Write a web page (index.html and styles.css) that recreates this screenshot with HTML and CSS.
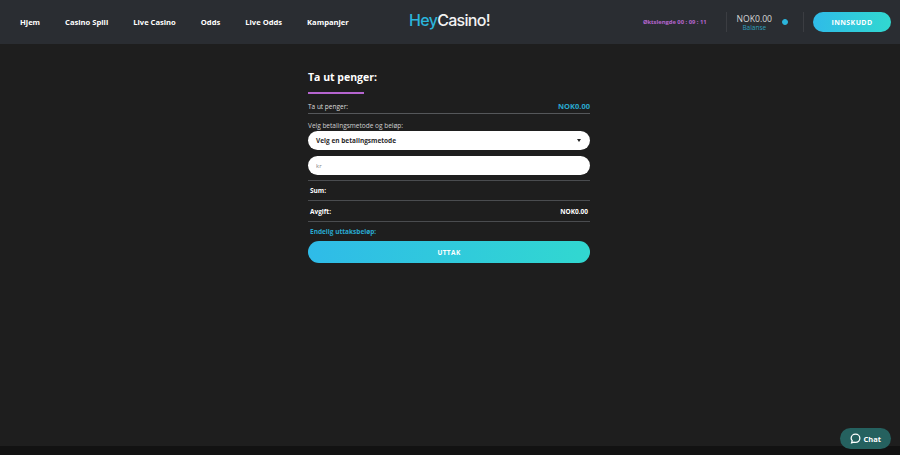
FILE: index.html
```html
<!DOCTYPE html>
<html lang="no">
<head>
  <meta charset="UTF-8" />
  <title>HeyCasino</title>
  <link rel="stylesheet" href="styles.css">
</head>
<body>
  <header class="topbar">
    <nav class="nav">
      <a>Hjem</a>
      <a>Casino Spill</a>
      <a>Live Casino</a>
      <a>Odds</a>
      <a>Live Odds</a>
      <a>Kampanjer</a>
    </nav>
    <div class="logo"><span class="logo-hey">Hey</span>Casino!</div>
    <div class="account">
      <span class="session">Øktslengde 00 : 09 : 11</span>
      <span class="divider"></span>
      <div class="balance">
        <span class="balance-amount">NOK0.00</span>
        <span class="balance-label">Balanse</span>
      </div>
      <span class="balance-dot"></span>
      <span class="divider divider-last"></span>
      <button class="deposit-btn">INNSKUDD</button>
    </div>
  </header>

  <main class="content">
    <section class="withdraw">
      <h1>Ta ut penger:</h1>
      <div class="title-line"></div>
      <div class="amount-row">
        <span>Ta ut penger:</span>
        <span class="amount">NOK0.00</span>
      </div>
      <label class="method-label">Velg betalingsmetode og beløp:</label>
      <div class="select-box">
        <span>Velg en betalingsmetode</span>
        <span class="caret"></span>
      </div>
      <input class="amount-input" type="text" placeholder="kr">
      <div class="sum-row"><span>Sum:</span></div>
      <div class="sum-row"><span>Avgift:</span><span>NOK0.00</span></div>
      <div class="final-row">Endelig uttaksbeløp:</div>
      <button class="withdraw-btn">UTTAK</button>
    </section>
  </main>

  <footer class="bottom-strip"></footer>

  <div class="chat-btn">
    <svg width="11" height="11" viewBox="0 0 24 24" fill="none" stroke="#fff" stroke-width="2.8">
      <path d="M12 2.500c5.500 0 9.500 4 9.500 9s-4 9-9.500 9c-1.200 0-2.400-.2-3.500-.6L3.500 21.500l1.300-4.800C3.400 15.100 2.500 13.400 2.500 11.500c0-5 4-9 9.500-9z"/>
    </svg>
    <span>Chat</span>
  </div>
</body>
</html>
```

FILE: styles.css
```css
html, body {
  margin: 0;
  padding: 0;
  height: 100%;
  overflow: hidden;
}
body {
  display: flex;
  flex-direction: column;
  background: #1e1e1e;
  color: #fff;
  font-family: 'Open Sans', sans-serif;
}
.topbar {
  flex: none;
  height: 44px;
  display: grid;
  grid-template-columns: 1fr auto 1fr;
  align-items: center;
  background: #2a2d32;
  padding: 0 9px 0 20px;
}
.nav {
  display: flex;
  gap: 25px;
  font-size: 7.600px;
  font-weight: 700;
  margin-top: -1px;
}
.logo {
  font-family: 'Inter', sans-serif;
  font-size: 16px;
  font-weight: 500;
  letter-spacing: -0.7px;
  color: #f2f2f2;
  margin-top: -5px;
  padding-right: 12px;
}
.logo-hey {
  color: #2bb5dc;
}
.account {
  display: flex;
  align-items: center;
  justify-content: flex-end;
}
.session {
  font-size: 5.800px;
  font-weight: 700;
  color: #b565cf;
  white-space: nowrap;
}
.divider {
  width: 1px;
  height: 20px;
  background: #3b3d42;
  margin: 0 10px 0 19px;
}
.divider-last {
  margin: 0 9px 0 15px;
}
.balance {
  display: flex;
  flex-direction: column;
  align-items: center;
  margin-top: 1px;
}
.balance-amount {
  font-size: 8.600px;
  line-height: 9px;
  color: #d8d8d8;
}
.balance-label {
  font-size: 6.500px;
  line-height: 7px;
  color: #2f9fbe;
}
.balance-dot {
  width: 4px;
  height: 4px;
  margin-left: 10px;
  border: 1px solid #2bb5dc;
  border-radius: 50%;
  background: #2bb5dc;
}
.deposit-btn, .withdraw-btn {
  border: none;
  color: #fff;
  font-family: inherit;
  font-weight: 700;
  letter-spacing: 0.4px;
  background: linear-gradient(90deg, #2fbbe8, #31d8d0);
}
.deposit-btn {
  width: 78px;
  height: 20px;
  padding: 0;
  border-radius: 10px;
  font-size: 7px;
}
.content {
  flex: 1;
  display: flex;
  justify-content: center;
}
.withdraw {
  width: 282px;
  margin-right: 2px;
  padding-top: 25px;
  font-size: 6.500px;
}
.withdraw h1 {
  margin: 0;
  font-size: 10.500px;
  line-height: 16px;
  font-weight: 700;
}
.title-line {
  width: 56px;
  height: 2px;
  margin-top: 7px;
  background: #b565cf;
}
.amount-row {
  display: flex;
  justify-content: space-between;
  align-items: flex-end;
  box-sizing: border-box;
  height: 20px;
  padding-bottom: 2px;
  border-bottom: 1px solid #55575a;
  color: #dcdcdc;
}
.amount {
  font-size: 7.500px;
  font-weight: 700;
  color: #29a9d0;
}
.method-label {
  display: block;
  margin-top: 7px;
  line-height: 10px;
  color: #d0d0d0;
}
.select-box, .amount-input {
  box-sizing: border-box;
  width: 100%;
  height: 19px;
  border-radius: 10px;
  background: #fff;
}
.select-box {
  display: flex;
  justify-content: space-between;
  align-items: center;
  padding: 0 9px 0 8px;
  color: #2a2a2a;
  font-weight: 700;
}
.caret {
  border-left: 2.500px solid transparent;
  border-right: 2.500px solid transparent;
  border-top: 3px solid #222;
}
.amount-input {
  display: block;
  margin: 6px 0 5px;
  padding: 0 8px;
  border: none;
  outline: none;
  font-family: inherit;
  font-size: 6px;
}
.amount-input::placeholder {
  color: #888;
}
.sum-row {
  display: flex;
  justify-content: space-between;
  align-items: center;
  box-sizing: border-box;
  height: 20px;
  padding: 0 2px;
  border-top: 1px solid #4a4c4f;
  font-weight: 700;
}
.sum-row + .sum-row {
  height: 21px;
}
.final-row {
  box-sizing: border-box;
  height: 20px;
  padding: 0 2px;
  line-height: 19px;
  border-top: 1px solid #4a4c4f;
  color: #29a9d0;
  font-weight: 700;
}
.withdraw-btn {
  display: block;
  width: 100%;
  height: 22px;
  padding: 0;
  border-radius: 11px;
  font-size: 6.500px;
}
.bottom-strip {
  flex: none;
  height: 9px;
  background: #121212;
}
.chat-btn {
  position: absolute;
  right: 9px;
  bottom: 6px;
  display: flex;
  align-items: center;
  gap: 3px;
  height: 21px;
  padding: 0 10px 0 10px;
  border-radius: 11px;
  background: #25615f;
  font-size: 7.500px;
  font-weight: 700;
}
```
